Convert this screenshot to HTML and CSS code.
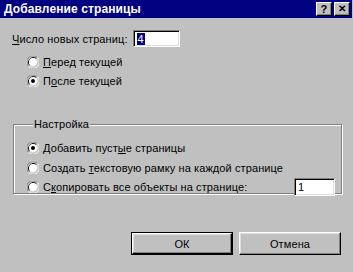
FILE: index.html
```html
<!DOCTYPE html>
<html lang="ru">
<head>
    <meta charset="UTF-8">
    <title>Добавление страницы</title>
    <link rel="stylesheet" href="styles.css">
</head>
<body>
    <div class="dialog">
        <div class="titlebar">
            <span class="title">Добавление страницы</span>
            <span class="tbtn">?</span>
            <span class="tbtn close">✕</span>
        </div>
        <div class="content">
            <div class="count-row">
                <span><u>Ч</u>исло новых страниц:</span>
                <span class="field count-field"><span class="sel">4</span></span>
            </div>
            <div class="options">
                <div class="radio">
                    <svg class="rb" width="12" height="12" viewBox="0 0 12 12"><path d="M1.5 10.5 A6 6 0 0 1 10.5 1.5" stroke="#808080" fill="none"/><path d="M2.5 9.5 A5 5 0 0 1 9.5 2.5" stroke="#000" fill="none"/><path d="M10.5 1.5 A6 6 0 0 1 1.5 10.5" stroke="#fff" fill="none"/><path d="M9.5 2.5 A5 5 0 0 1 2.5 9.5" stroke="#dfdfdf" fill="none"/><circle cx="6" cy="6" r="4" fill="#fff"/></svg>
                    <span><u>П</u>еред текущей</span>
                </div>
                <div class="radio">
                    <svg class="rb" width="12" height="12" viewBox="0 0 12 12"><path d="M1.5 10.5 A6 6 0 0 1 10.5 1.5" stroke="#808080" fill="none"/><path d="M2.5 9.5 A5 5 0 0 1 9.5 2.5" stroke="#000" fill="none"/><path d="M10.5 1.5 A6 6 0 0 1 1.5 10.5" stroke="#fff" fill="none"/><path d="M9.5 2.5 A5 5 0 0 1 2.5 9.5" stroke="#dfdfdf" fill="none"/><circle cx="6" cy="6" r="4" fill="#fff"/><circle cx="6" cy="6" r="2" fill="#000"/></svg>
                    <span>П<u>о</u>сле текущей</span>
                </div>
            </div>
            <fieldset class="group">
                <legend>Настройка</legend>
                <div class="radio">
                    <svg class="rb" width="12" height="12" viewBox="0 0 12 12"><path d="M1.5 10.5 A6 6 0 0 1 10.5 1.5" stroke="#808080" fill="none"/><path d="M2.5 9.5 A5 5 0 0 1 9.5 2.5" stroke="#000" fill="none"/><path d="M10.5 1.5 A6 6 0 0 1 1.5 10.5" stroke="#fff" fill="none"/><path d="M9.5 2.5 A5 5 0 0 1 2.5 9.5" stroke="#dfdfdf" fill="none"/><circle cx="6" cy="6" r="4" fill="#fff"/><circle cx="6" cy="6" r="2" fill="#000"/></svg>
                    <span>Добавить пуст<u>ы</u>е страницы</span>
                </div>
                <div class="radio">
                    <svg class="rb" width="12" height="12" viewBox="0 0 12 12"><path d="M1.5 10.5 A6 6 0 0 1 10.5 1.5" stroke="#808080" fill="none"/><path d="M2.5 9.5 A5 5 0 0 1 9.5 2.5" stroke="#000" fill="none"/><path d="M10.5 1.5 A6 6 0 0 1 1.5 10.5" stroke="#fff" fill="none"/><path d="M9.5 2.5 A5 5 0 0 1 2.5 9.5" stroke="#dfdfdf" fill="none"/><circle cx="6" cy="6" r="4" fill="#fff"/></svg>
                    <span>Создать <u>т</u>екстовую рамку на каждой странице</span>
                </div>
                <div class="radio copy-row">
                    <svg class="rb" width="12" height="12" viewBox="0 0 12 12"><path d="M1.5 10.5 A6 6 0 0 1 10.5 1.5" stroke="#808080" fill="none"/><path d="M2.5 9.5 A5 5 0 0 1 9.5 2.5" stroke="#000" fill="none"/><path d="M10.5 1.5 A6 6 0 0 1 1.5 10.5" stroke="#fff" fill="none"/><path d="M9.5 2.5 A5 5 0 0 1 2.5 9.5" stroke="#dfdfdf" fill="none"/><circle cx="6" cy="6" r="4" fill="#fff"/></svg>
                    <span>С<u>к</u>опировать все объекты на странице:</span>
                    <span class="field copy-field">1</span>
                </div>
            </fieldset>
            <div class="buttons">
                <span class="btn default"><span class="btn-face">ОК</span></span>
                <span class="btn"><span class="btn-face">Отмена</span></span>
            </div>
        </div>
    </div>
</body>
</html>
```

FILE: styles.css
```css
body {
    margin: 0;
    background: #c0c0c0;
}
.dialog {
    width: 353px;
    height: 272px;
    background: #c0c0c0;
    font-family: 'Liberation Sans', Arial, sans-serif;
    font-size: 11px;
    letter-spacing: 0.1px;
    color: #000;
}
.titlebar {
    height: 18px;
    background: #000080;
    display: flex;
    align-items: center;
    padding: 0 2px 0 4px;
    margin-right: 1px;
}
.title {
    flex: 1;
    color: #fff;
    font-weight: bold;
    font-size: 12px;
    letter-spacing: 0.1px;
}
.tbtn {
    width: 14px;
    height: 12px;
    margin-left: 2px;
    background: #c0c0c0;
    border: 1px solid;
    border-color: #fff #000 #000 #fff;
    box-shadow: inset -1px -1px #808080;
    font-weight: bold;
    font-size: 11px;
    line-height: 12px;
    text-align: center;
}
.tbtn.close {
    font-size: 10px;
}
.content {
    padding: 12px 12px 0 12px;
}
.count-row {
    display: flex;
    align-items: center;
    height: 17px;
}
.field {
    background: #fff;
    border: 1px solid;
    border-color: #808080 #fff #fff #808080;
    box-shadow: inset 1px 1px #000, inset -1px -1px #dfdfdf;
    height: 15px;
    box-sizing: border-box;
    padding: 2px 3px;
    line-height: 12px;
}
.count-field {
    width: 47px;
    height: 17px;
    margin-left: 5px;
}
.sel {
    background: #000080;
    color: #fff;
    padding: 0 1px;
}
.options {
    padding: 5px 0 0 15px;
}
.radio {
    display: flex;
    align-items: center;
    height: 19px;
}
.rb {
    margin-right: 4px;
    flex: none;
}
.group {
    margin: 28px 0 0 1px;
    padding: 8px 0 6px 13px;
    border: 1px solid #808080;
    box-shadow: inset 1px 1px #fff, 1px 1px #fff;
    width: 329px;
    height: 76px;
    box-sizing: border-box;
}
.group .radio {
    height: 20px;
}
.group .radio + .radio {
    height: 19px;
}
.group legend {
    padding: 0 1px;
    margin-left: 6px;
    background: #c0c0c0;
}
.copy-field {
    width: 41px;
    height: 18px;
    margin-left: auto;
    margin-right: 6px;
}
.buttons {
    display: flex;
    justify-content: flex-end;
    gap: 6px;
    margin-top: 38px;
}
.btn {
    width: 102px;
    height: 23px;
    box-sizing: border-box;
    display: flex;
}
.btn.default {
    border: 1px solid #000;
}
.btn-face {
    flex: 1;
    display: flex;
    align-items: center;
    justify-content: center;
    border: 1px solid;
    border-color: #fff #000 #000 #fff;
    box-shadow: inset -1px -1px #808080, inset 1px 1px #dfdfdf;
}
```
